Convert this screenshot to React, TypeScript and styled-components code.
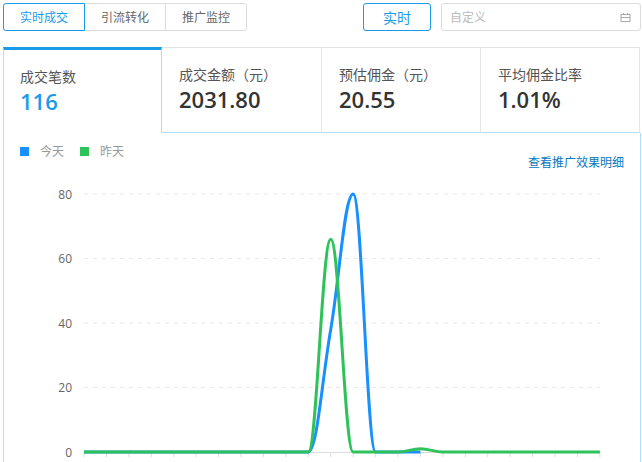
import React from "react";
import styled, {createGlobalStyle} from "styled-components";

const GlobalStyle = createGlobalStyle`
    html, body {
        margin: 0;
        padding: 0;
        background-color: #fff;
        overflow: hidden;
    }

    body {
        width: 642px;
        height: 462px;
        font-family: "Open Sans", "Noto Sans CJK SC", sans-serif;
    }
`

const today = [0, 0, 0, 0, 0, 0, 0, 0, 0, 0, 0, 38, 80, 0, 0, 0];
const yesterday = [0, 0, 0, 0, 0, 0, 0, 0, 0, 0, 0, 66, 0, 0, 0, 1, 0, 0, 0, 0, 0, 0, 0, 0];

const tabs = [
    {label: "成交笔数", value: "116"},
    {label: "成交金额（元）", value: "2031.80"},
    {label: "预估佣金（元）", value: "20.55"},
    {label: "平均佣金比率", value: "1.01%"},
];

// chart coordinates, the svg starts at (4, 174) of the page
const X0 = 80;
const X1 = 596;
const STEP = 22.43;
const Y0 = 278;
const UNIT = 3.225;
const HANDLE = 0.39;

const px = (i: number) => X0 + i * STEP;
const py = (v: number) => Y0 - v * UNIT;

// smooth line, flat at every peak and foot
function smoothPath(data: number[]) {
    const pts = data.map((v, i) => [px(i), py(v)]);
    const slope = (i: number) => {
        const prev = pts[i - 1];
        const next = pts[i + 1];
        if (!prev || !next) return 0;
        const y = pts[i][1];
        if ((prev[1] - y) * (next[1] - y) >= 0) return 0;
        return (next[1] - prev[1]) / (2 * STEP);
    };
    const h = STEP * HANDLE;
    let d = `M${pts[0][0]} ${pts[0][1]}`;
    for (let i = 1; i < pts.length; i++) {
        const a = pts[i - 1];
        const b = pts[i];
        d += `C${(a[0] + h).toFixed(2)} ${(a[1] + slope(i - 1) * h).toFixed(2)} ${(b[0] - h).toFixed(2)} ${(b[1] - slope(i) * h).toFixed(2)} ${b[0].toFixed(2)} ${b[1].toFixed(2)}`;
    }
    return d;
}

function CalendarIcon() {
    return (
        <svg width="11" height="11" viewBox="0 0 11 11" fill="none" stroke="#aaa" strokeWidth="1">
            <rect x="1" y="2.5" width="9" height="7" />
            <path d="M1 5.5H10M3.5 1V3M7.5 1V3" />
        </svg>
    );
}

function Chart() {
    return (
        <ChartSvg width="636" height="288" viewBox="0 0 636 288">
            {[80, 60, 40, 20].map(v => (
                <line key={v} x1={X0} x2={X1} y1={py(v)} y2={py(v)} stroke="#e8e8e8" strokeDasharray="4 5" />
            ))}
            {[80, 60, 40, 20, 0].map(v => (
                <text key={v} x={68} y={py(v) + 4.5} textAnchor="end" fontSize="12" fill="#666">{v}</text>
            ))}
            <line x1={X0} x2={X1} y1={py(0) + 0.5} y2={py(0) + 0.5} stroke="#ddd" />
            {yesterday.map((_, i) => (
                <line key={i} x1={px(i)} x2={px(i)} y1={py(0)} y2={py(0) + 5} stroke="#ddd" />
            ))}
            <path d={smoothPath(today)} fill="none" stroke="#1890ff" strokeWidth="3" />
            <path d={smoothPath(yesterday)} fill="none" stroke="#2fc25b" strokeWidth="3" />
        </ChartSvg>
    );
}

export default function App() {
    return (
        <Page>
            <GlobalStyle />
            <Toolbar>
                <Segments>
                    <Segment $active>实时成交</Segment>
                    <Segment>引流转化</Segment>
                    <Segment>推广监控</Segment>
                </Segments>
                <RealtimeButton>实时</RealtimeButton>
                <DateInput>
                    <span>自定义</span>
                    <CalendarIcon />
                </DateInput>
            </Toolbar>
            <Tabs>
                {tabs.map((tab, i) => (
                    <Tab key={tab.label} $active={i === 0}>
                        <TabLabel>{tab.label}</TabLabel>
                        <TabValue $active={i === 0}>{tab.value}</TabValue>
                    </Tab>
                ))}
            </Tabs>
            <Panel>
                <PanelHead>
                    <Legend>
                        <LegendItem $color={"#1890ff"}>今天</LegendItem>
                        <LegendItem $color={"#2fc25b"}>昨天</LegendItem>
                    </Legend>
                    <DetailLink>查看推广效果明细</DetailLink>
                </PanelHead>
                <Chart />
            </Panel>
        </Page>
    );
}

const Page = styled.div`
    width: 642px;
    height: 462px;
    overflow: hidden;
    box-sizing: border-box;
    padding: 3px 1px 0 3px;
`

const Toolbar = styled.div`
    display: flex;
    align-items: stretch;
    height: 28px;
    margin-bottom: 16px;
`

const Segments = styled.div`
    display: flex;
    margin-right: 116px;
`

const Segment = styled.div<{$active?: boolean}>`
    box-sizing: border-box;
    width: 82px;
    margin-left: ${props => props.$active ? "0" : "-1px"};
    display: flex;
    align-items: center;
    justify-content: center;
    font-size: 12px;
    color: ${props => props.$active ? "#1a9bea" : "#666"};
    border: 1px solid ${props => props.$active ? "#1a9bea" : "#ddd"};
    position: relative;
    z-index: ${props => props.$active ? 1 : 0};

    &:first-child {
        border-radius: 3px 0 0 3px;
    }

    &:last-child {
        border-radius: 0 3px 3px 0;
    }
`

const RealtimeButton = styled.div`
    box-sizing: border-box;
    width: 68px;
    margin-right: 10px;
    display: flex;
    align-items: center;
    justify-content: center;
    font-size: 14px;
    color: #1a9bea;
    border: 1px solid #1a9bea;
    border-radius: 3px;
`

const DateInput = styled.div`
    box-sizing: border-box;
    width: 200px;
    padding: 0 9px 0 8px;
    display: flex;
    align-items: center;
    justify-content: space-between;
    font-size: 12px;
    color: #bbb;
    border: 1px solid #ddd;
    border-radius: 3px;
`

const Tabs = styled.div`
    display: grid;
    grid-template-columns: 159px 160px 159px 159px;
    width: 637px;
    height: 86px;
`

const Tab = styled.div<{$active: boolean}>`
    box-sizing: border-box;
    padding: ${props => props.$active ? "17px 0 0 16px" : "17px 0 0 17px"};
    border-top: ${props => props.$active ? "3px solid #1a9bea" : "1px solid #e5e5e5"};
    border-right: 1px solid ${props => props.$active ? "#aee0fd" : "#e5e5e5"};
    border-left: ${props => props.$active ? "1px solid #aee0fd" : "0"};
    border-bottom: ${props => props.$active ? "0" : "1px solid #aee0fd"};
`

const TabLabel = styled.div`
    font-size: 14px;
    line-height: 20px;
    color: #555;
`

const TabValue = styled.div<{$active: boolean}>`
    font-size: 22px;
    line-height: 28px;
    font-weight: 600;
    color: ${props => props.$active ? "#1a9bea" : "#333"};
`

const Panel = styled.div`
    box-sizing: border-box;
    width: 638px;
    height: 329px;
    border-left: 1px solid #aee0fd;
    border-right: 1px solid #aee0fd;
`

const PanelHead = styled.div`
    box-sizing: border-box;
    display: flex;
    justify-content: space-between;
    align-items: flex-start;
    height: 41px;
    padding: 10px 16px 0 16px;
`

const Legend = styled.div`
    display: flex;
    gap: 16px;
`

const LegendItem = styled.div<{$color: string}>`
    display: flex;
    align-items: center;
    gap: 11px;
    font-size: 12px;
    line-height: 17px;
    color: #999;

    &::before {
        content: "";
        width: 9px;
        height: 9px;
        background-color: ${props => props.$color};
    }
`

const DetailLink = styled.a`
    margin-top: 11px;
    font-size: 12px;
    line-height: 17px;
    color: #0a77bd;
`

const ChartSvg = styled.svg`
    display: block;
`
